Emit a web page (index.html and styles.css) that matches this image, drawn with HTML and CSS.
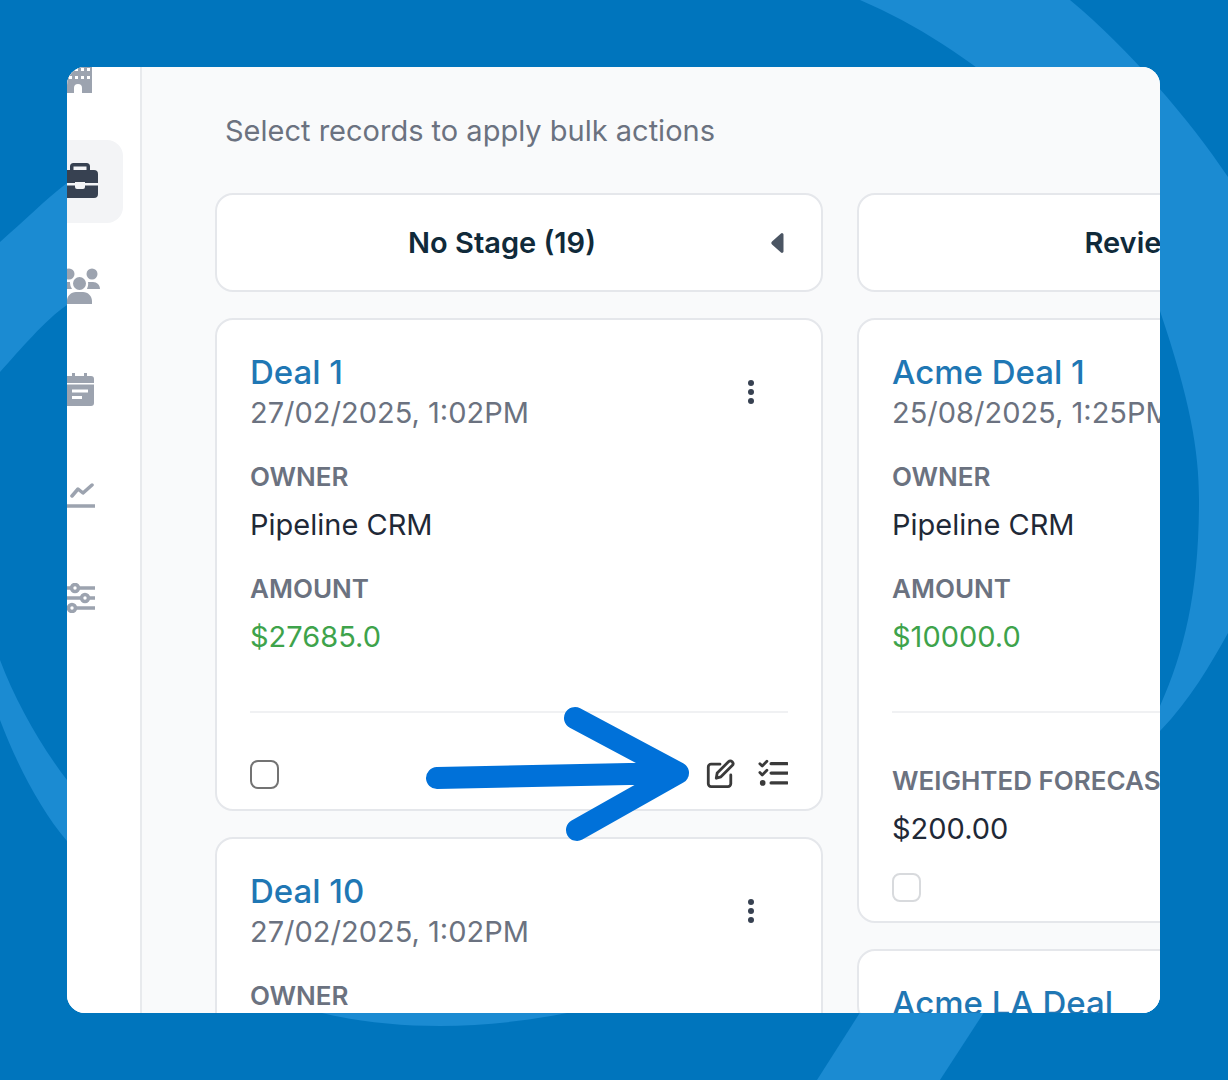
FILE: index.html
```html
<!DOCTYPE html>
<html lang="en">
<head>
<meta charset="utf-8">
<title>Pipeline CRM deals</title>
<link rel="stylesheet" href="styles.css">
</head>
<body>
<svg class="backdrop" viewBox="0 0 1228 1080" aria-hidden="true">
  <path class="swirl" d="M860 0 C1000 60 1130 190 1160 311 C1190 400 1199 450 1199 500 C1199 590 1185 650 1160 706 L1150 745 L1160 731 C1190 700 1210 665 1228 633 L1228 177 C1190 120 1130 50 1070 0 Z"/>
  <path class="swirl" d="M0 242 C25 220 45 200 67 183 L100 170 L100 280 L67 305 C45 320 20 350 0 372 Z"/>
  <path class="swirl" d="M0 660 C15 700 40 745 67 780 L300 960 L600 960 L567 1013 C520 1022 480 1026 440 1026 C400 1026 360 1022 322 1013 C230 975 140 910 67 841 C40 810 15 760 0 720 Z"/>
  <path class="swirl" d="M817 1080 L868 1000 L992 1000 L940 1080 Z"/>
</svg>
<div class="frame">
  <nav class="sidebar">
    <div class="nav-item nav-item-first">
      <svg class="nav-icon icon-building" viewBox="0 0 28 34"><path fill-rule="evenodd" d="M1 0h26a1 1 0 0 1 1 1v33H18v-5a4 4 0 0 0-8 0v5H0V1a1 1 0 0 1 1-1zM5 9v3h3V9zm6 0v3h3V9zm6 0v3h3V9zm6 0v3h3V9zM5 17v3h3v-3zm6 0v3h3v-3zm6 0v3h3v-3zm6 0v3h3v-3z"/></svg>
    </div>
    <div class="nav-item nav-item-active">
      <svg class="nav-icon icon-case" viewBox="0 0 36 38"><path fill-rule="evenodd" d="M8 7V3.500A3.500 3.500 0 0 1 11.500 0h13A3.500 3.500 0 0 1 28 3.500V7h4a4 4 0 0 1 4 4v9H23v-1H13v1H0v-9a4 4 0 0 1 4-4zm3.500 0h13V3.500h-13z"/><path d="M0 22.500h13V24a2 2 0 0 0 2 2h6a2 2 0 0 0 2-2v-1.500h13V31a4 4 0 0 1-4 4H4a4 4 0 0 1-4-4z"/></svg>
    </div>
    <div class="nav-item">
      <svg class="nav-icon icon-team" viewBox="0 0 42 36"><circle cx="11" cy="6" r="5.500"/><circle cx="34" cy="6" r="5.500"/><circle cx="21.500" cy="15.500" r="6.500"/><path d="M0 21c0-4 3-7 7-7h5a11 11 0 0 0 2 7zM30 14h5c4 0 7 3 7 7H29a11 11 0 0 0 1-7zM9 36v-3c0-5 4-9 9-9h7c5 0 9 4 9 9v3z"/></svg>
    </div>
    <div class="nav-item">
      <svg class="nav-icon icon-calendar" viewBox="0 0 30 33"><path fill-rule="evenodd" d="M8 0h3v3h9V0h3v3h4a3 3 0 0 1 3 3v4H0V6a3 3 0 0 1 3-3h5zM0 11.500h30V30a3 3 0 0 1-3 3H3a3 3 0 0 1-3-3zM8 16.500v3h16v-3zm0 6.500v3h10v-3z"/></svg>
    </div>
    <div class="nav-item">
      <svg class="nav-stroke" viewBox="0 0 30 30"><path d="M7 17l6-7 5 4 9-8M0 27h30"/></svg>
    </div>
    <div class="nav-item">
      <svg class="nav-stroke" viewBox="0 0 30 30"><path d="M0 5h6.500M13.500 5H30M0 15h16.500M23.500 15H30M0 25h3.500M10.500 25H30"/><circle cx="10" cy="5" r="3.500"/><circle cx="20" cy="15" r="3.500"/><circle cx="7" cy="25" r="3.500"/></svg>
    </div>
  </nav>
  <main class="main">
    <p class="hint">Select records to apply bulk actions</p>
    <div class="board">
      <section class="column">
        <header class="stage">
          <span class="stage-name">No Stage (19)</span>
          <svg class="caret" viewBox="0 0 14 22"><path d="M11 1.500 2 9.500a2 2 0 0 0 0 3l9 8a1.500 1.500 0 0 0 2.500-1V2.500A1.500 1.500 0 0 0 11 1.500z"/></svg>
        </header>
        <article class="card card-main">
          <div class="card-top">
            <div>
              <a class="deal-name">Deal 1</a>
              <div class="deal-date">27/02/2025, 1:02PM</div>
            </div>
            <svg class="kebab" viewBox="0 0 6 26"><circle cx="3" cy="4" r="3"/><circle cx="3" cy="13" r="3"/><circle cx="3" cy="22" r="3"/></svg>
          </div>
          <div class="label">OWNER</div>
          <div class="value">Pipeline CRM</div>
          <div class="label label-gap">AMOUNT</div>
          <div class="value amount">$27685.0</div>
          <div class="card-foot">
            <span class="check"></span>
            <div class="actions">
              <svg class="action" viewBox="0 0 32 32"><path d="M16 5.500H6.500a3 3 0 0 0-3 3v18a3 3 0 0 0 3 3h18a3 3 0 0 0 3-3V17"/><path d="M12 20.500l1-5.500L25 3a2.800 2.800 0 0 1 4 4L17 19z"/></svg>
              <svg class="action" viewBox="0 0 32 32"><path d="M2 5l2.500 2.500 5-5M2 14.500l2.500 2.500 5-5"/><path class="thick" d="M14 5h17M14 15h17M14 25.500h17"/><circle class="dot" cx="5" cy="25.500" r="3"/></svg>
            </div>
          </div>
        </article>
        <article class="card">
          <div class="card-top">
            <div>
              <a class="deal-name">Deal 10</a>
              <div class="deal-date">27/02/2025, 1:02PM</div>
            </div>
            <svg class="kebab" viewBox="0 0 6 26"><circle cx="3" cy="4" r="3"/><circle cx="3" cy="13" r="3"/><circle cx="3" cy="22" r="3"/></svg>
          </div>
          <div class="label">OWNER</div>
          <div class="value">Pipeline CRM</div>
        </article>
      </section>
      <section class="column">
        <header class="stage stage-plain">
          <span class="stage-name">Review (4)</span>
        </header>
        <article class="card card-tall">
          <div class="card-top">
            <div>
              <a class="deal-name">Acme Deal 1</a>
              <div class="deal-date">25/08/2025, 1:25PM</div>
            </div>
          </div>
          <div class="label">OWNER</div>
          <div class="value">Pipeline CRM</div>
          <div class="label label-gap">AMOUNT</div>
          <div class="value amount">$10000.0</div>
          <div class="rule"></div>
          <div class="label">WEIGHTED FORECAST</div>
          <div class="value">$200.00</div>
          <span class="check check-faint"></span>
        </article>
        <article class="card">
          <a class="deal-name">Acme LA Deal</a>
        </article>
      </section>
    </div>
  </main>
  <svg class="arrow" viewBox="0 0 280 150" aria-hidden="true"><path d="M15 81 256 76M153 21 256 76 155 133"/></svg>
</div>
</body>
</html>
```
FILE: styles.css
```css
* { box-sizing: border-box; }
html, body { margin: 0; height: 100%; }
body {
  position: relative;
  width: 1228px;
  height: 1080px;
  padding: 67px 68px 67px 67px;
  overflow: hidden;
  background: #0075bd;
  font-family: Inter, "Liberation Sans", sans-serif;
}
.backdrop { position: absolute; inset: 0; width: 1228px; height: 1080px; }
.swirl { fill: #1b8bd2; }
.frame {
  position: relative;
  display: flex;
  height: 946px;
  overflow: hidden;
  border-radius: 18px;
  background: #fff;
}
.sidebar {
  flex: 0 0 75px;
  display: flex;
  flex-direction: column;
  border-right: 2px solid #e8eaed;
  background: #fff;
}
.nav-item {
  display: flex;
  flex: 0 0 auto;
  align-items: center;
  justify-content: flex-end;
  width: 56px;
  height: 83px;
  padding-right: 28px;
  margin-bottom: 21px;
  border-radius: 0 16px 16px 0;
}
.nav-item-first {
  height: 26px;
  margin-bottom: 47px;
  align-items: flex-end;
  padding-right: 31px;
}
.nav-item-active { background: #f3f4f6; padding-right: 25px; }
.nav-item:has(.icon-team) { padding-right: 23px; }
.nav-item:has(.icon-calendar) { padding-right: 29px; }
.nav-icon { fill: #9ca3af; flex: none; }
.icon-building { width: 28px; height: 34px; }
.icon-case { width: 36px; height: 38px; fill: #374151; }
.icon-team { width: 42px; height: 36px; }
.icon-calendar { width: 30px; height: 33px; }
.nav-stroke { width: 30px; height: 30px; fill: none; stroke: #9ca3af; stroke-width: 3.500; stroke-linecap: round; stroke-linejoin: round; flex: none; }
.main {
  flex: 1;
  min-width: 0;
  padding: 46px 0 0 73px;
  background: #f9fafb;
}
.hint { margin: 0 0 44px 10px; font-size: 29px; line-height: 36px; color: #6b7280; white-space: nowrap; }
.board { display: flex; gap: 34px; }
.column { flex: 0 0 608px; display: flex; flex-direction: column; gap: 26px; }
.stage {
  position: relative;
  display: flex;
  align-items: center;
  justify-content: center;
  height: 99px;
  padding-right: 34px;
  background: #fff;
  border: 2px solid #e5e7eb;
  border-radius: 18px;
}
.stage-plain { padding-right: 4px; }
.stage-name { font-size: 29px; font-weight: 600; color: #102a3a; white-space: nowrap; }
.caret { position: absolute; right: 37px; top: 37px; width: 14px; height: 22px; fill: #4b5563; }
.card {
  display: block;
  flex: none;
  padding: 33px 33px 0;
  background: #fff;
  border: 2px solid #e5e7eb;
  border-radius: 18px;
}
.card-main { height: 493px; }
.card-tall { height: 605px; }
.card-top { display: flex; justify-content: space-between; align-items: center; padding-right: 34px; margin-bottom: 26px; }
.deal-name { display: block; font-size: 33px; line-height: 38px; font-weight: 500; color: #1f77b4; white-space: nowrap; }
.deal-date { font-size: 29px; line-height: 44px; color: #6b7280; white-space: nowrap; }
.kebab { width: 6px; height: 26px; margin-bottom: 5px; fill: #374151; flex: none; }
.label { font-size: 26px; line-height: 32px; font-weight: 600; color: #6b7280; white-space: nowrap; }
.label-gap { margin-top: 32px; }
.value { margin-top: 16px; font-size: 29px; line-height: 32px; color: #1f2937; white-space: nowrap; }
.amount { color: #3ea34b; }
.card-foot {
  display: flex;
  justify-content: space-between;
  align-items: center;
  margin-top: 58px;
  padding-top: 46px;
  border-top: 2px solid #f0f1f3;
}
.rule { margin: 58px 0 52px; border-top: 2px solid #f0f1f3; }
.check { display: block; width: 29px; height: 29px; border: 2px solid #737373; border-radius: 8px; }
.check-faint { margin-top: 28px; border-color: #d8dadd; }
.actions { display: flex; gap: 23px; }
.action { width: 30px; height: 30px; fill: none; stroke: #3a3a3a; stroke-width: 3; stroke-linecap: round; stroke-linejoin: round; }
.action .thick { stroke-width: 3.500; }
.action .dot { fill: #3a3a3a; stroke: none; }
.arrow {
  position: absolute;
  left: 355px;
  top: 630px;
  width: 280px;
  height: 150px;
  fill: none;
  stroke: #0071d9;
  stroke-width: 22px;
  stroke-linecap: round;
  stroke-linejoin: round;
}
```
